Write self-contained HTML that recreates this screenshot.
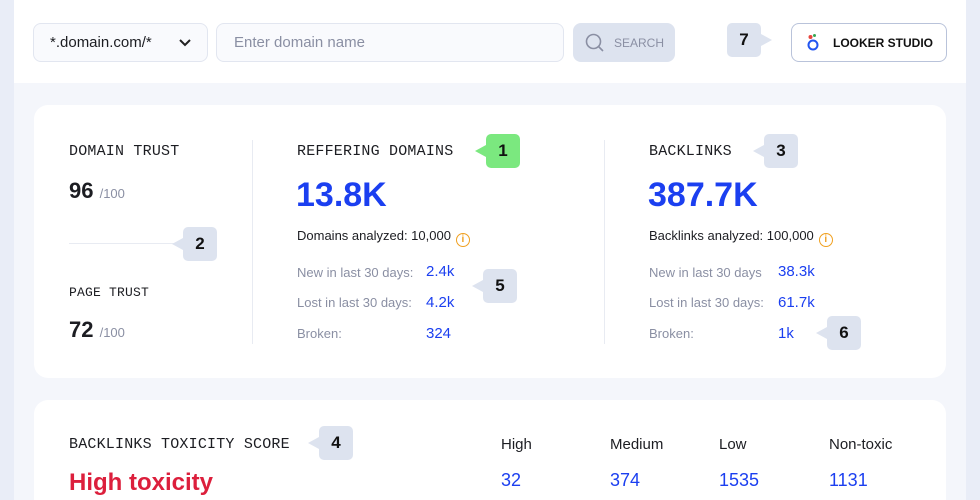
<!DOCTYPE html>
<html style="width:980px;height:500px;overflow:hidden"><head><style>
*{margin:0;padding:0;box-sizing:border-box}
body{width:980px;height:500px;overflow:hidden;background:#e9edf7;font-family:"Liberation Sans",sans-serif;position:relative}
.a{position:absolute}
.mono{font-family:"Liberation Mono",monospace;font-size:15px;color:#1c1d22;letter-spacing:0.2px}
.badge{position:absolute;width:34px;height:34px;border-radius:5px;background:#dde3ef;font-weight:bold;font-size:17px;color:#111;text-align:center;line-height:34px}
.badge:before{content:"";position:absolute;left:-11px;top:11px;border-right:11px solid #dde3ef;border-top:6px solid transparent;border-bottom:6px solid transparent}
.badge.r:before{left:auto;right:-11px;border-right:none;border-left:11px solid #dde3ef}
.badge.gr{background:#7be87f}
.badge.gr:before{border-right-color:#7be87f}
.g{color:#8a8fa3;font-size:13px}
.b{color:#1b3ff0;font-size:15px}
.big{color:#1b3ff0;font-size:34px;font-weight:bold}
.info{display:inline-block;width:14px;height:14px;border:1.5px solid #f0a020;border-radius:50%;color:#f0a020;font-size:10px;text-align:center;line-height:11px;font-weight:bold;vertical-align:-2px;margin-left:5px}
</style></head><body>
<div class="a" style="left:14px;top:0;width:952px;height:83px;background:#fff"></div>
<div class="a" style="left:14px;top:83px;width:952px;height:417px;background:#f4f6fb"></div>

<div class="a" style="left:33px;top:23px;width:175px;height:39px;border:1px solid #e2e6f0;border-radius:8px;background:#f9fafd;font-size:15px;color:#1c1d22;padding:10px 0 0 16px">*.domain.com/*
<svg class="a" style="left:145px;top:15px" width="12" height="8"><path d="M1 1L6 6L11 1" stroke="#222" stroke-width="2" fill="none"/></svg></div>
<div class="a" style="left:216px;top:23px;width:348px;height:39px;border:1px solid #e2e6f0;border-radius:8px;background:#f9fafd;font-size:15px;color:#8a8fa3;padding:10px 0 0 17px">Enter domain name</div>
<div class="a" style="left:573px;top:23px;width:102px;height:39px;border-radius:8px;background:#dde3ef;font-size:12px;color:#8a8fa3;padding:13px 0 0 41px">SEARCH
<svg class="a" style="left:12px;top:10px" width="20" height="20"><circle cx="8.5" cy="8.5" r="7" stroke="#8a8fa3" stroke-width="1.6" fill="none"/><path d="M13.5 13.5L18 18" stroke="#8a8fa3" stroke-width="1.6"/></svg></div>
<div class="badge r" style="left:727px;top:23px">7</div>
<div class="a" style="left:791px;top:23px;width:156px;height:39px;border:1px solid #b9c3da;border-radius:8px;background:#fff;font-size:12px;color:#111;padding:12px 0 0 41px;font-weight:bold">LOOKER STUDIO
<svg class="a" style="left:14px;top:8px" width="16" height="22"><circle cx="7" cy="13" r="4.5" stroke="#2255f0" stroke-width="2" fill="none"/><circle cx="4.5" cy="5" r="2" fill="#e8453c"/><circle cx="8.5" cy="3.5" r="1.5" fill="#34a853"/></svg></div>

<div class="a" style="left:34px;top:105px;width:912px;height:273px;background:#fff;border-radius:14px"></div>
<div class="a mono" style="left:69px;top:143px">DOMAIN TRUST</div>
<div class="a" style="left:69px;top:178px;font-size:22px;font-weight:bold;color:#1c1d22">96 <span style="font-size:13px;font-weight:normal;color:#8a8fa3">/100</span></div>
<div class="a" style="left:69px;top:243px;width:105px;height:1px;background:#e8ebf2"></div>
<div class="badge" style="left:183px;top:227px">2</div>
<div class="a mono" style="left:69px;top:285px;font-size:13px">PAGE TRUST</div>
<div class="a" style="left:69px;top:317px;font-size:22px;font-weight:bold;color:#1c1d22">72 <span style="font-size:13px;font-weight:normal;color:#8a8fa3">/100</span></div>
<div class="a" style="left:252px;top:140px;width:1px;height:204px;background:#e8ebf2"></div>

<div class="a mono" style="left:297px;top:143px">REFFERING DOMAINS</div>
<div class="badge gr" style="left:486px;top:134px">1</div>
<div class="a big" style="left:296px;top:176px">13.8K</div>
<div class="a" style="left:297px;top:228px;font-size:13px;color:#1c1d22">Domains analyzed: 10,000<span class="info">i</span></div>
<div class="a g" style="left:297px;top:265px">New in last 30 days:</div><div class="a b" style="left:426px;top:263px">2.4k</div>
<div class="a g" style="left:297px;top:295px">Lost in last 30 days:</div><div class="a b" style="left:426px;top:294px">4.2k</div>
<div class="a g" style="left:297px;top:326px">Broken:</div><div class="a b" style="left:426px;top:325px">324</div>
<div class="badge" style="left:483px;top:269px">5</div>
<div class="a" style="left:604px;top:140px;width:1px;height:204px;background:#e8ebf2"></div>

<div class="a mono" style="left:649px;top:143px">BACKLINKS</div>
<div class="badge" style="left:764px;top:134px">3</div>
<div class="a big" style="left:648px;top:176px">387.7K</div>
<div class="a" style="left:649px;top:228px;font-size:13px;color:#1c1d22">Backlinks analyzed: 100,000<span class="info">i</span></div>
<div class="a g" style="left:649px;top:265px">New in last 30 days</div><div class="a b" style="left:778px;top:263px">38.3k</div>
<div class="a g" style="left:649px;top:295px">Lost in last 30 days:</div><div class="a b" style="left:778px;top:294px">61.7k</div>
<div class="a g" style="left:649px;top:326px">Broken:</div><div class="a b" style="left:778px;top:325px">1k</div>
<div class="badge" style="left:827px;top:316px">6</div>

<div class="a" style="left:34px;top:400px;width:912px;height:100px;background:#fff;border-radius:14px 14px 0 0"></div>
<div class="a mono" style="left:69px;top:436px">BACKLINKS TOXICITY SCORE</div>
<div class="badge" style="left:319px;top:426px">4</div>
<div class="a" style="left:69px;top:469px;font-size:24px;font-weight:bold;color:#dc1f3c">High toxicity</div>
<div class="a" style="left:501px;top:436px;font-size:15px;color:#1c1d22">High</div>
<div class="a" style="left:610px;top:436px;font-size:15px;color:#1c1d22">Medium</div>
<div class="a" style="left:719px;top:436px;font-size:15px;color:#1c1d22">Low</div>
<div class="a" style="left:829px;top:436px;font-size:15px;color:#1c1d22">Non-toxic</div>
<div class="a b" style="left:501px;top:470px;font-size:18px">32</div>
<div class="a b" style="left:610px;top:470px;font-size:18px">374</div>
<div class="a b" style="left:719px;top:470px;font-size:18px">1535</div>
<div class="a b" style="left:829px;top:470px;font-size:18px">1131</div>
</body></html>
